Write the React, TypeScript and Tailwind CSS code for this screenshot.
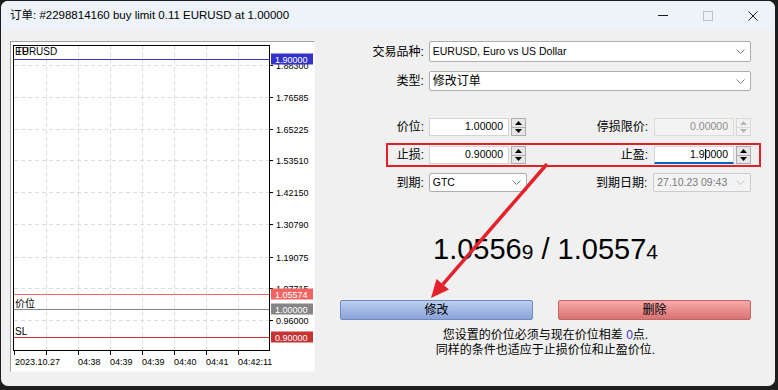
import React from "react";

const yLabels = [
  { y: 65, t: "1.88300" },
  { y: 97, t: "1.76585" },
  { y: 129, t: "1.65225" },
  { y: 160, t: "1.53510" },
  { y: 192, t: "1.42150" },
  { y: 224, t: "1.30790" },
  { y: 257, t: "1.19075" },
  { y: 288, t: "1.07715" },
  { y: 320, t: "0.96000" },
];

const xGrid = [46, 78, 110, 142, 174, 206, 238];

const timeLabels = [
  { x: 15, t: "2023.10.27" },
  { x: 78, t: "04:38" },
  { x: 110, t: "04:39" },
  { x: 142, t: "04:39" },
  { x: 174, t: "04:40" },
  { x: 206, t: "04:41" },
  { x: 238, t: "04:42:11" },
];

// price markers drawn on the right axis
const marks = [
  { y: 59, t: "1.90000", c: "#3333cc" },
  { y: 294, t: "1.05574", c: "#f06464" },
  { y: 309, t: "1.00000", c: "#858585" },
  { y: 337, t: "0.90000", c: "#c83232" },
];

const chartFont = "Liberation Sans, Noto Sans CJK SC, sans-serif";

function Chart() {
  return (
    <svg width="303" height="329" viewBox="11 42 303 329" className="block">
      <rect x="11" y="42" width="303" height="329" fill="#ffffff" />
      {yLabels.map((l) => (
        <line key={l.t} x1="14" x2="269" y1={l.y + 0.5} y2={l.y + 0.5} stroke="#dcdcdc" strokeDasharray="4 3" />
      ))}
      {xGrid.map((x) => (
        <line key={x} x1={x + 0.5} x2={x + 0.5} y1="46" y2="350" stroke="#dcdcdc" strokeDasharray="4 3" />
      ))}
      {marks.map((m) => (
        <line key={m.t} x1="14" x2="269" y1={m.y + 0.5} y2={m.y + 0.5} stroke={m.c} />
      ))}
      <rect x="13.5" y="45.5" width="256" height="305" fill="none" stroke="#000" />

      {/* axis ticks */}
      {yLabels.map((l) => (
        <line key={"t" + l.t} x1="270" x2="273" y1={l.y + 0.5} y2={l.y + 0.5} stroke="#000" />
      ))}
      {[14, ...xGrid].map((x) => (
        <line key={"b" + x} x1={x + 0.5} x2={x + 0.5} y1="351" y2="355" stroke="#000" />
      ))}

      <g fontFamily={chartFont} fontSize="9" fill="#000">
        {yLabels.map((l) => (
          <text key={"l" + l.t} x="276" y={l.y + 3.5}>
            {l.t}
          </text>
        ))}
        {timeLabels.map((l, i) => (
          <text key={i} x={l.x} y="364.5">
            {l.t}
          </text>
        ))}
        <text x="16" y="55" fontSize="10">TP</text>
        <text x="15" y="55" fontSize="10">EURUSD</text>
        <text x="15" y="307" fontSize="10">价位</text>
        <text x="15" y="335" fontSize="10">SL</text>
      </g>

      {marks.map((m) => (
        <g key={"m" + m.t}>
          <rect x="271" y={m.y - 5.5} width="42" height="11" fill={m.c} />
          <text x="275" y={m.y + 3.5} fontFamily={chartFont} fontSize="9" fill="#fff">
            {m.t}
          </text>
        </g>
      ))}
    </svg>
  );
}

function Chevron({ color = "#7a7a7a" }: { color?: string }) {
  return (
    <svg width="9" height="5" viewBox="0 0 9 5" className="shrink-0">
      <path d="M0.5 0.5L4.5 4.5L8.5 0.5" fill="none" stroke={color} />
    </svg>
  );
}

function Spinner({ disabled }: { disabled?: boolean }) {
  const fill = disabled ? "#b5b5b5" : "#000";
  return (
    <div
      className={`ml-[2px] flex h-[18px] w-[15px] flex-col border ${
        disabled ? "border-[#d9d9d9] bg-[#f2f2f2]" : "border-[#adadad] bg-[#e6e6e6]"
      }`}
    >
      <div className={`flex flex-1 items-center justify-center border-b ${disabled ? "border-[#d9d9d9]" : "border-[#adadad]"}`}>
        <svg width="7" height="4" viewBox="0 0 7 4">
          <path d="M3.5 0L7 4H0z" fill={fill} />
        </svg>
      </div>
      <div className="flex flex-1 items-center justify-center">
        <svg width="7" height="4" viewBox="0 0 7 4">
          <path d="M0 0H7L3.5 4z" fill={fill} />
        </svg>
      </div>
    </div>
  );
}

function NumField({ value, disabled }: { value: string; disabled?: boolean }) {
  return (
    <div className="flex items-center">
      <div
        className={`flex h-[18px] w-[80px] items-center justify-end border pr-[5px] text-[10.5px] ${
          disabled ? "border-[#dcdcdc] bg-[#f3f3f3] text-[#8c8c8c]" : "border-[#d4d4d4] bg-white"
        }`}
      >
        {value}
      </div>
      <Spinner disabled={disabled} />
    </div>
  );
}

export default function App() {
  return (
    <div className="relative h-[390px] w-[778px] overflow-hidden bg-[#1d1d1d] font-['Liberation_Sans','Noto_Sans_CJK_SC',sans-serif] text-black">
      <div className="ml-[1px] mt-[1px] flex h-[385px] w-[774px] flex-col overflow-hidden rounded-[7px] bg-[#f0f0f0]">
        {/* title bar */}
        <div className="flex h-[29px] shrink-0 items-center bg-[#edf3f9]">
          <div className="pl-[9px] text-[11.5px] leading-none">订单: #2298814160 buy limit 0.11 EURUSD at 1.00000</div>
          <div className="ml-auto flex h-full">
            <div className="flex w-[45px] items-center justify-center">
              <div className="h-px w-[10px] bg-[#1a1a1a]" />
            </div>
            <div className="flex w-[45px] items-center justify-center">
              <div className="h-[10px] w-[10px] border border-[#c2c2c2]" />
            </div>
            <div className="flex w-[45px] items-center justify-center">
              <svg width="10" height="10" viewBox="0 0 10 10">
                <path d="M0.5 0.5L9.5 9.5M9.5 0.5L0.5 9.5" stroke="#1a1a1a" strokeWidth="1" />
              </svg>
            </div>
          </div>
        </div>

        <div className="flex flex-1">
          {/* chart */}
          <div className="ml-[9px] mt-[11px] h-[331px] w-[305px] shrink-0 border border-[#a0a0a0] border-b-[#fafafa] border-r-[#fafafa]">
            <Chart />
          </div>

          {/* form */}
          <div className="ml-[25px] mt-[11px] w-[411px] shrink-0 text-[12px]">
            <div className="flex h-[21px] items-center">
              <div className="w-[84px] text-right">交易品种:</div>
              <div className="ml-[5px] flex h-full w-[323px] items-center justify-between rounded-[2px] border border-[#adadad] bg-white pl-[3px] pr-[5px] text-[10.5px]">
                EURUSD, Euro vs US Dollar
                <Chevron />
              </div>
            </div>

            <div className="mt-[9px] flex h-[20px] items-center">
              <div className="w-[84px] text-right">类型:</div>
              <div className="ml-[5px] flex h-full w-[323px] items-center justify-between rounded-[2px] border border-[#adadad] bg-white pl-[3px] pr-[5px]">
                修改订单
                <Chevron />
              </div>
            </div>

            <div className="mt-[27px] flex h-[18px] items-center">
              <div className="w-[84px] text-right">价位:</div>
              <div className="ml-[5px]">
                <NumField value="1.00000" />
              </div>
              <div className="w-[122px] text-right">停损限价:</div>
              <div className="ml-[6px]">
                <NumField value="0.00000" disabled />
              </div>
            </div>

            <div className="ml-[46px] mt-[7px] flex h-[24px] w-[375px] items-center border-2 border-[#e2202a]">
              <div className="w-[36px] text-right">止损:</div>
              <div className="ml-[5px]">
                <NumField value="0.90000" />
              </div>
              <div className="w-[122px] text-right">止盈:</div>
              <div className="ml-[6px] flex items-center">
                <div className="flex h-[18px] w-[80px] items-center justify-end border border-[#d4d4d4] border-b-2 border-b-[#0067c0] bg-white pr-[5px] text-[10.5px]">
                  1.9<span className="-mr-px inline-block h-[11px] w-px bg-black" />0000
                </div>
                <Spinner />
              </div>
            </div>

            <div className="mt-[6px] flex h-[19px] items-center">
              <div className="w-[84px] text-right">到期:</div>
              <div className="ml-[5px] flex h-full w-[98px] items-center justify-between rounded-[2px] border border-[#adadad] bg-white pl-[3px] pr-[5px] text-[10.5px]">
                GTC
                <Chevron />
              </div>
              <div className="w-[121px] text-right">到期日期:</div>
              <div className="ml-[6px] flex h-full w-[98px] items-center justify-between rounded-[2px] border border-[#cccccc] bg-[#f3f3f3] pl-[3px] pr-[5px] text-[10.5px] text-[#7a7a7a]">
                27.10.23 09:43
                <Chevron color="#c4c4c4" />
              </div>
            </div>

            <div className="mt-[39px] text-center text-[29px] leading-[36px]">
              1.0556<span className="text-[21px]">9</span> / 1.0557<span className="text-[21px]">4</span>
            </div>

            <div className="mt-[30px] flex h-[20px] justify-between">
              <div className="flex w-[193px] items-center justify-center rounded-[2px] border border-[#6f8ac2] bg-linear-to-b from-[#bccef0] to-[#8aa4d8]">
                修改
              </div>
              <div className="flex w-[193px] items-center justify-center rounded-[2px] border border-[#c46464] bg-linear-to-b from-[#f6aaaa] to-[#da7272]">
                删除
              </div>
            </div>

            <div className="mt-[8px] text-center leading-[15px]">
              <div>
                您设置的价位必须与现在价位相差 <span className="text-[#3535d0]">0</span>点.
              </div>
              <div>同样的条件也适应于止损价位和止盈价位.</div>
            </div>
          </div>
        </div>
      </div>

      {/* annotation arrow */}
      <svg className="pointer-events-none absolute left-0 top-0" width="778" height="390" viewBox="0 0 778 390">
        <line x1="547" y1="164" x2="442.8" y2="284.4" stroke="#e3232b" strokeWidth="3.5" />
        <polygon points="431,298 449,289.5 436.5,279" fill="#e3232b" />
      </svg>
    </div>
  );
}
